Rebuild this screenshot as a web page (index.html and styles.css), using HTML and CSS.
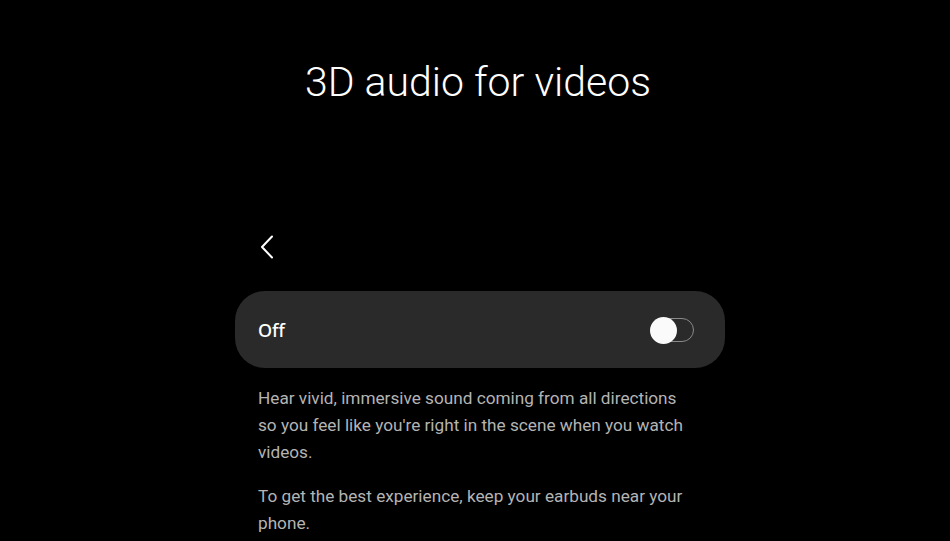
FILE: index.html
```html
<!DOCTYPE html>
<html>
<head>
<meta charset="utf-8">
<link rel="stylesheet" href="styles.css">
</head>
<body>
<div class="page">
  <h1 class="title">3D audio for videos</h1>
  <div class="panel">
    <div class="back">
      <svg width="14" height="24" viewBox="0 0 14 24"><path d="M12 1.5 L2 12 L12 22.5" fill="none" stroke="#fff" stroke-width="2" stroke-linecap="round" stroke-linejoin="round"/></svg>
    </div>
    <div class="card">
      <span class="card-label">Off</span>
      <div class="switch"><div class="track"></div><div class="thumb"></div></div>
    </div>
    <div class="desc">
      <p>Hear vivid, immersive sound coming from all directions so you feel like you're right in the scene when you watch videos.</p>
      <p>To get the best experience, keep your earbuds near your phone.</p>
    </div>
  </div>
</div>
</body>
</html>
```
FILE: styles.css
```css
html, body { margin: 0; padding: 0; background: #000; }
body { width: 950px; height: 541px; overflow: hidden; }
.page { display: flex; flex-direction: column; }
.title {
  margin: 58px 0 0 6px;
  text-align: center;
  font-family: Roboto, "Liberation Sans", sans-serif;
  font-weight: 300;
  font-size: 41px;
  line-height: 48px;
  color: #fff;
  letter-spacing: 0;
}
.panel { margin-left: 235px; width: 490px; display: flex; flex-direction: column; }
.back { margin: 129px 0 0 25px; height: 24px; display: flex; }
.card {
  margin-top: 32px;
  height: 77px;
  background: #2a2a2a;
  border-radius: 30px;
  display: flex;
  align-items: center;
  justify-content: space-between;
  padding: 0 29px 0 23px;
}
.card-label {
  font-family: "Noto Sans", "Open Sans", sans-serif;
  font-weight: 500;
  font-size: 18px;
  color: #fff;
}
.switch { position: relative; width: 46px; height: 28px; }
.track {
  position: absolute; left: 4px; top: 2px; width: 38px; height: 22px;
  border: 1.5px solid #8a8a8a; border-radius: 13px; box-sizing: content-box;
}
.thumb {
  position: absolute; left: 0; top: 1px; width: 27px; height: 27px;
  border-radius: 50%; background: #fafafa;
}
.desc {
  padding: 17px 0 0 23px;
  width: 434px;
  font-family: Roboto, "Liberation Sans", sans-serif;
  font-size: 17.2px;
  line-height: 27px;
  color: #b4b4b4;
}
.desc p { margin: 0 0 17px 0; }
```
